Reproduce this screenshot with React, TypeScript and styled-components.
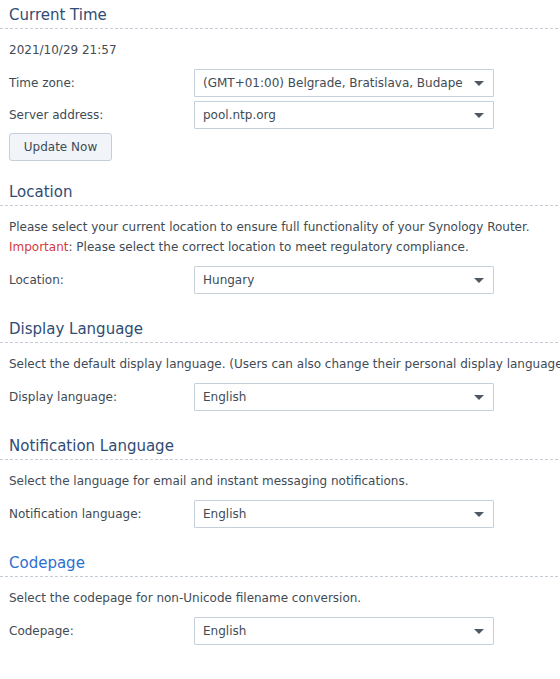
import React from "react";
import styled, { createGlobalStyle } from "styled-components";

const Global = createGlobalStyle`
  html, body { margin: 0; padding: 0; background: #ffffff; }
  body { font-family: "DejaVu Sans", Verdana, sans-serif; font-size: 12px; color: #414b55; }
`;

const Page = styled.div`
  width: 560px;
  overflow: hidden;
  white-space: nowrap;
`;

const Section = styled.section<{ $gap?: number }>`
  margin-bottom: ${(p) => p.$gap ?? 20}px;
`;

const Heading = styled.h2<{ $active?: boolean }>`
  margin: 0;
  box-sizing: border-box;
  height: 29px;
  padding-top: 2px;
  line-height: 27px;
  padding-left: 9px;
  font-size: 15px;
  font-weight: normal;
  color: ${(p) => (p.$active ? "#2d6fd1" : "#2f4c74")};
  background-image: linear-gradient(to right, #c4ccd6 60%, transparent 60%);
  background-size: 5px 1px;
  background-repeat: repeat-x;
  background-position: left bottom;
`;

const Body = styled.div`
  padding: 11px 9px 0 9px;
  display: flex;
  flex-direction: column;
`;

const Text = styled.div`
  line-height: 20px;
`;

const Important = styled.span`
  color: #d43b3b;
`;

const Row = styled.div<{ $top?: number }>`
  display: flex;
  align-items: center;
  height: 28px;
  margin-top: ${(p) => p.$top ?? 4}px;
`;

const Label = styled.div`
  width: 185px;
  flex: none;
`;

const Select = styled.div`
  box-sizing: border-box;
  width: 300px;
  height: 28px;
  border: 1px solid #c6d0da;
  border-radius: 1px;
  display: flex;
  align-items: center;
  padding: 0 9px 0 8px;
  color: #414b55;
`;

const SelectValue = styled.span`
  flex: 1;
  overflow: hidden;
  text-overflow: clip;
`;

const Arrow = styled.span`
  flex: none;
  width: 0;
  height: 0;
  border-left: 5px solid transparent;
  border-right: 5px solid transparent;
  border-top: 5px solid #4f5963;
  margin-left: 11px;
`;

const Button = styled.button`
  align-self: flex-start;
  box-sizing: border-box;
  margin-top: 4px;
  height: 28px;
  width: 103px;
  border: 1px solid #c5cfd9;
  border-radius: 3px;
  background: #f1f5f9;
  font-family: inherit;
  font-size: 12px;
  color: #414b55;
  padding: 0;
`;

function Dropdown({ value }: { value: string }) {
  return (
    <Select>
      <SelectValue>{value}</SelectValue>
      <Arrow />
    </Select>
  );
}

function Field({ label, value, top }: { label: string; value: string; top?: number }) {
  return (
    <Row $top={top}>
      <Label>{label}</Label>
      <Dropdown value={value} />
    </Row>
  );
}

export default function App() {
  return (
    <Page>
      <Global />
      <Section $gap={16}>
        <Heading>Current Time</Heading>
        <Body>
          <Text>2021/10/29 21:57</Text>
          <Field top={9} label="Time zone:" value="(GMT+01:00) Belgrade, Bratislava, Budapest, Ljubljana, Prague" />
          <Field label="Server address:" value="pool.ntp.org" />
          <Button>Update Now</Button>
        </Body>
      </Section>
      <Section>
        <Heading>Location</Heading>
        <Body>
          <Text>Please select your current location to ensure full functionality of your Synology Router.</Text>
          <Text>
            <Important>Important</Important>: Please select the correct location to meet regulatory compliance.
          </Text>
          <Field top={9} label="Location:" value="Hungary" />
        </Body>
      </Section>
      <Section>
        <Heading>Display Language</Heading>
        <Body>
          <Text>Select the default display language. (Users can also change their personal display language in Personal settings.)</Text>
          <Field top={9} label="Display language:" value="English" />
        </Body>
      </Section>
      <Section>
        <Heading>Notification Language</Heading>
        <Body>
          <Text>Select the language for email and instant messaging notifications.</Text>
          <Field top={9} label="Notification language:" value="English" />
        </Body>
      </Section>
      <Section>
        <Heading $active>Codepage</Heading>
        <Body>
          <Text>Select the codepage for non-Unicode filename conversion.</Text>
          <Field top={9} label="Codepage:" value="English" />
        </Body>
      </Section>
    </Page>
  );
}
